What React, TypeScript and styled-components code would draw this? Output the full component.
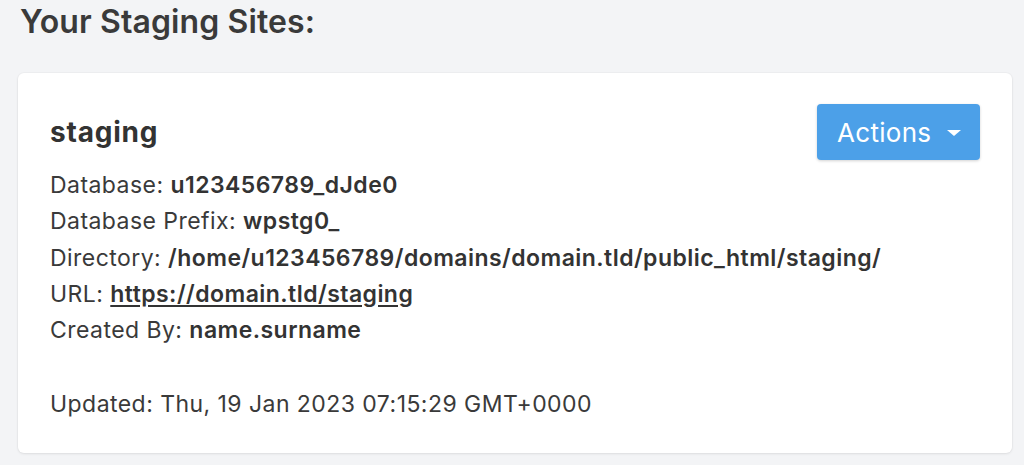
import React from "react";
import styled, { createGlobalStyle } from "styled-components";

const GlobalStyle = createGlobalStyle`
  html, body {
    margin: 0;
    padding: 0;
    background: #f3f4f6;
  }
  body {
    font-family: Inter, "Noto Sans", "Liberation Sans", sans-serif;
    color: #3a3a3a;
    -webkit-font-smoothing: antialiased;
  }
`;

const Page = styled.div`
  width: 1024px;
  height: 465px;
  box-sizing: border-box;
  padding: 0 12px 0 18px;
  display: flex;
  flex-direction: column;
  overflow: hidden;
`;

const Heading = styled.h1`
  margin: 0 0 0 2px;
  height: 73px;
  box-sizing: border-box;
  padding-top: 2px;
  font-size: 32px;
  line-height: 40px;
  font-weight: 600;
  color: #3a3a3a;
  letter-spacing: 0.1px;
`;

const Card = styled.section`
  background: #ffffff;
  border-radius: 6px;
  box-shadow: 0 1px 3px rgba(0, 0, 0, 0.08), 0 0 0 1px rgba(0, 0, 0, 0.02);
  padding: 31px 32px 30px 32px;
  display: flex;
  flex-direction: column;
`;

const CardHeader = styled.div`
  display: flex;
  align-items: center;
  justify-content: space-between;
  height: 56px;
  margin-bottom: 7px;
`;

const Title = styled.h2`
  margin: 0;
  font-size: 28px;
  font-weight: 700;
  color: #333;
  letter-spacing: 0.8px;
`;

const ActionsButton = styled.button`
  display: flex;
  align-items: center;
  gap: 16px;
  height: 56px;
  width: 163px;
  box-sizing: border-box;
  padding: 0 20px;
  border: none;
  border-radius: 4px;
  background: #4ca0e8;
  color: #ffffff;
  font-family: inherit;
  font-size: 26px;
  letter-spacing: 0.3px;
  font-weight: 400;
  box-shadow: 0 1px 3px rgba(0, 0, 0, 0.18);
  cursor: pointer;
`;

const Caret = styled.span`
  width: 0;
  height: 0;
  border-left: 7px solid transparent;
  border-right: 7px solid transparent;
  border-top: 6px solid #ffffff;
  margin-top: 2px;
`;

const Details = styled.div`
  display: flex;
  flex-direction: column;
`;

const Line = styled.div<{ $gapTop?: boolean }>`
  font-size: 23px;
  line-height: 36.3px;
  letter-spacing: 0.45px;
  color: #3a3a3a;
  white-space: nowrap;
  margin-top: ${(p) => (p.$gapTop ? "38px" : "0")};
`;

const Value = styled.strong`
  font-weight: 600;
  color: #333;
`;

const Link = styled.a`
  font-weight: 600;
  color: #333;
  text-decoration: underline;
  text-underline-offset: 3px;
`;

export default function App() {
  return (
    <>
      <GlobalStyle />
      <Page>
        <Heading>Your Staging Sites:</Heading>
        <Card>
          <CardHeader>
            <Title>staging</Title>
            <ActionsButton type="button">
              Actions<Caret />
            </ActionsButton>
          </CardHeader>
          <Details>
            <Line>
              Database: <Value>u123456789_dJde0</Value>
            </Line>
            <Line>
              Database Prefix: <Value>wpstg0_</Value>
            </Line>
            <Line>
              Directory: <Value>/home/u123456789/domains/domain.tld/public_html/staging/</Value>
            </Line>
            <Line>
              URL: <Link href="#">https://domain.tld/staging</Link>
            </Line>
            <Line>
              Created By: <Value>name.surname</Value>
            </Line>
            <Line $gapTop>Updated: Thu, 19 Jan 2023 07:15:29 GMT+0000</Line>
          </Details>
        </Card>
      </Page>
    </>
  );
}
